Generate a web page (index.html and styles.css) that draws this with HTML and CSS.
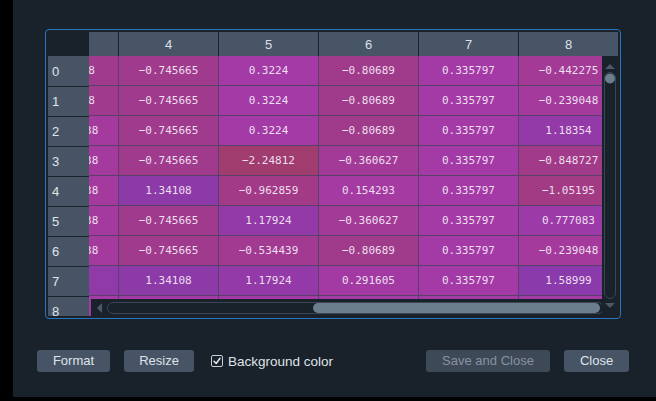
FILE: index.html
```html
<!DOCTYPE html>
<html>
<head>
<meta charset="utf-8">
<link rel="stylesheet" href="styles.css">
</head>
<body>
<div class="window">
  <div class="frame">
    <div class="table">
      <div class="corner"></div>
      <div class="hhead">
        <div class="hstrip">
          <div class="hcell">3</div>
          <div class="hcell">4</div>
          <div class="hcell">5</div>
          <div class="hcell">6</div>
          <div class="hcell">7</div>
          <div class="hcell">8</div>
        </div>
      </div>
      <div class="vhead">
        <div class="rcell">0</div>
        <div class="rcell">1</div>
        <div class="rcell">2</div>
        <div class="rcell">3</div>
        <div class="rcell">4</div>
        <div class="rcell">5</div>
        <div class="rcell">6</div>
        <div class="rcell">7</div>
        <div class="rcell">8</div>
      </div>
      <div class="body">
        <div class="bstrip">
          <div class="row">
            <div class="cell" style="background:#a03a8c">−0.65838</div>
            <div class="cell" style="background:#a03a8c">−0.745665</div>
            <div class="cell" style="background:#a33aa6">0.3224</div>
            <div class="cell" style="background:#a03a8a">−0.80689</div>
            <div class="cell" style="background:#a33aa6">0.335797</div>
            <div class="cell" style="background:#a33a95">−0.442275</div>
          </div>
          <div class="row">
            <div class="cell" style="background:#a03a8c">−0.65838</div>
            <div class="cell" style="background:#a03a8c">−0.745665</div>
            <div class="cell" style="background:#a33aa6">0.3224</div>
            <div class="cell" style="background:#a03a8a">−0.80689</div>
            <div class="cell" style="background:#a33aa6">0.335797</div>
            <div class="cell" style="background:#a43a9b">−0.239048</div>
          </div>
          <div class="row">
            <div class="cell" style="background:#a43a9e">−0.122838</div>
            <div class="cell" style="background:#a03a8c">−0.745665</div>
            <div class="cell" style="background:#a33aa6">0.3224</div>
            <div class="cell" style="background:#a03a8a">−0.80689</div>
            <div class="cell" style="background:#a33aa6">0.335797</div>
            <div class="cell" style="background:#9339a8">1.18354</div>
          </div>
          <div class="row">
            <div class="cell" style="background:#a43a9e">−0.122838</div>
            <div class="cell" style="background:#a03a8c">−0.745665</div>
            <div class="cell" style="background:#a03c6e">−2.24812</div>
            <div class="cell" style="background:#a43a98">−0.360627</div>
            <div class="cell" style="background:#a33aa6">0.335797</div>
            <div class="cell" style="background:#a13a88">−0.848727</div>
          </div>
          <div class="row">
            <div class="cell" style="background:#a43a9e">−0.122838</div>
            <div class="cell" style="background:#8c3aa8">1.34108</div>
            <div class="cell" style="background:#a33a87">−0.962859</div>
            <div class="cell" style="background:#a43aa2">0.154293</div>
            <div class="cell" style="background:#a33aa6">0.335797</div>
            <div class="cell" style="background:#a33b84">−1.05195</div>
          </div>
          <div class="row">
            <div class="cell" style="background:#a43a9e">−0.122838</div>
            <div class="cell" style="background:#a03a8c">−0.745665</div>
            <div class="cell" style="background:#9339a8">1.17924</div>
            <div class="cell" style="background:#a43a98">−0.360627</div>
            <div class="cell" style="background:#a33aa6">0.335797</div>
            <div class="cell" style="background:#9c3aa8">0.777083</div>
          </div>
          <div class="row">
            <div class="cell" style="background:#a43a9e">−0.122838</div>
            <div class="cell" style="background:#a03a8c">−0.745665</div>
            <div class="cell" style="background:#a33a92">−0.534439</div>
            <div class="cell" style="background:#a03a8a">−0.80689</div>
            <div class="cell" style="background:#a33aa6">0.335797</div>
            <div class="cell" style="background:#a43a9b">−0.239048</div>
          </div>
          <div class="row">
            <div class="cell" style="background:#9039a8">1.2583</div>
            <div class="cell" style="background:#8c3aa8">1.34108</div>
            <div class="cell" style="background:#9339a8">1.17924</div>
            <div class="cell" style="background:#a33aa4">0.291605</div>
            <div class="cell" style="background:#a33aa6">0.335797</div>
            <div class="cell" style="background:#8a3aaa">1.58999</div>
          </div>
          <div class="row">
            <div class="cell" style="background:#a33aa6">0.3224</div>
            <div class="cell" style="background:#a33aa6">0.3224</div>
            <div class="cell" style="background:#a33aa6">0.3224</div>
            <div class="cell" style="background:#a33aa6">0.3224</div>
            <div class="cell" style="background:#a33aa6">0.335797</div>
            <div class="cell" style="background:#a33aa6">0.3224</div>
          </div>
        </div>
        <div class="vscroll">
          <svg width="16" height="260" viewBox="0 0 16 260">
            <polygon points="3,13 13,13 8,8" fill="#4a5867"/>
            <rect x="2.5" y="16.5" width="11" height="226" rx="5.5" fill="none" stroke="#3a4654"/>
            <circle cx="8" cy="22.5" r="5" fill="#6a7e8d"/>
            <polygon points="3,247 13,247 8,252" fill="#4a5867"/>
          </svg>
        </div>
        <div class="hscroll">
          <svg width="511" height="17" viewBox="0 0 511 17">
            <polygon points="11,4 11,14 6,9" fill="#4a5867"/>
            <rect x="16.5" y="3.5" width="496" height="11" rx="5.5" fill="none" stroke="#3a4654"/>
            <rect x="222" y="4" width="287" height="10" rx="5" fill="#6a7e8d"/>
          </svg>
        </div>
      </div>
    </div>
  </div>
  <div class="footer">
    <button class="btn btn-format">Format</button>
    <button class="btn btn-resize">Resize</button>
    <label class="check">
      <span class="box">
        <svg width="10" height="10" viewBox="0 0 10 10"><path d="M2 5.2 L4.2 7.5 L8 2.3" fill="none" stroke="#e6e9ed" stroke-width="1.5" stroke-linecap="round" stroke-linejoin="round"/></svg>
      </span>
      <span class="check-label">Background color</span>
    </label>
    <div class="spacer"></div>
    <button class="btn btn-save disabled">Save and Close</button>
    <button class="btn btn-close">Close</button>
  </div>
</div>
</body>
</html>
```

FILE: styles.css
```css
html, body {
  margin: 0;
  padding: 0;
  background: #000;
}
body {
  width: 656px;
  height: 401px;
  overflow: hidden;
  font-family: "Liberation Sans", Arial, sans-serif;
}
.window {
  margin-left: 13px;
  width: 643px;
  height: 397px;
  background: #19212b;
  padding-top: 29px;
  box-sizing: border-box;
}
.frame {
  margin-left: 32px;
  width: 576px;
  height: 290px;
  box-sizing: border-box;
  border: 1px solid #2677c0;
  border-radius: 4px;
  padding: 2px;
}
.table {
  display: grid;
  grid-template-columns: 41px 529px;
  grid-template-rows: 24px 260px;
}
.corner {
  background: #19212b;
}
.hhead {
  overflow: hidden;
}
.hstrip {
  display: flex;
  margin-left: -71px;
}
.hcell {
  flex: none;
  width: 100px;
  height: 24px;
  box-sizing: border-box;
  border-left: 1px solid #1b232d;
  background: #475567;
  color: #dce1e7;
  font-size: 13px;
  display: flex;
  align-items: center;
  justify-content: center;
}
.vhead {
  overflow: hidden;
  display: flex;
  flex-direction: column;
  position: relative;
  z-index: 1;
}
.rcell {
  flex: none;
  height: 30px;
  box-sizing: border-box;
  border-top: 1px solid #1b232d;
  background: #465466;
  color: #e0e4ea;
  font-size: 13px;
  padding-left: 4px;
  display: flex;
  align-items: center;
}
.rcell:first-child {
  border-top: 0;
}
.body {
  position: relative;
  overflow: hidden;
}
.bstrip {
  margin-left: -71px;
  width: 600px;
  display: flex;
  flex-direction: column;
}
.row {
  display: flex;
}
.cell {
  flex: none;
  width: 100px;
  height: 30px;
  box-sizing: border-box;
  border-left: 1px solid #584069;
  border-bottom: 1px solid #584069;
  display: flex;
  align-items: center;
  justify-content: center;
  font-family: "DejaVu Sans Mono", monospace;
  font-size: 11px;
  color: #ecdfee;
  white-space: nowrap;
}
.vscroll {
  position: absolute;
  top: 0;
  right: 0;
  width: 16px;
  height: 260px;
  background: #19212b;
}
.vscroll svg, .hscroll svg {
  display: block;
}
.hscroll {
  position: absolute;
  left: 2px;
  bottom: 0;
  width: 511px;
  height: 17px;
  background: #19212b;
}
.footer {
  display: flex;
  align-items: center;
  margin-top: 31px;
  padding-left: 24px;
  padding-right: 27px;
  height: 22px;
}
.btn {
  height: 22px;
  padding: 0;
  border: 0;
  border-radius: 3px;
  background: #465466;
  color: #dfe3e8;
  font-family: "Liberation Sans", Arial, sans-serif;
  font-size: 13px;
  margin: 0 14px 0 0;
  line-height: 22px;
  text-align: center;
}
.btn-format { width: 73px; }
.btn-resize { width: 70px; }
.btn-save { width: 124px; }
.btn-close { width: 65px; }
.btn:last-child {
  margin-right: 0;
}
.btn.disabled {
  background: #3d4957;
  color: #8792a0;
}
.check {
  display: flex;
  align-items: center;
  margin-left: 3px;
  color: #dfe3e8;
  font-size: 13.5px;
}
.box {
  width: 12px;
  height: 12px;
  box-sizing: border-box;
  border: 1px solid #c9ced4;
  border-radius: 2px;
  display: flex;
  align-items: center;
  justify-content: center;
}
.box svg {
  display: block;
}
.check-label {
  margin-left: 5px;
}
.spacer {
  flex: 1;
}
```
